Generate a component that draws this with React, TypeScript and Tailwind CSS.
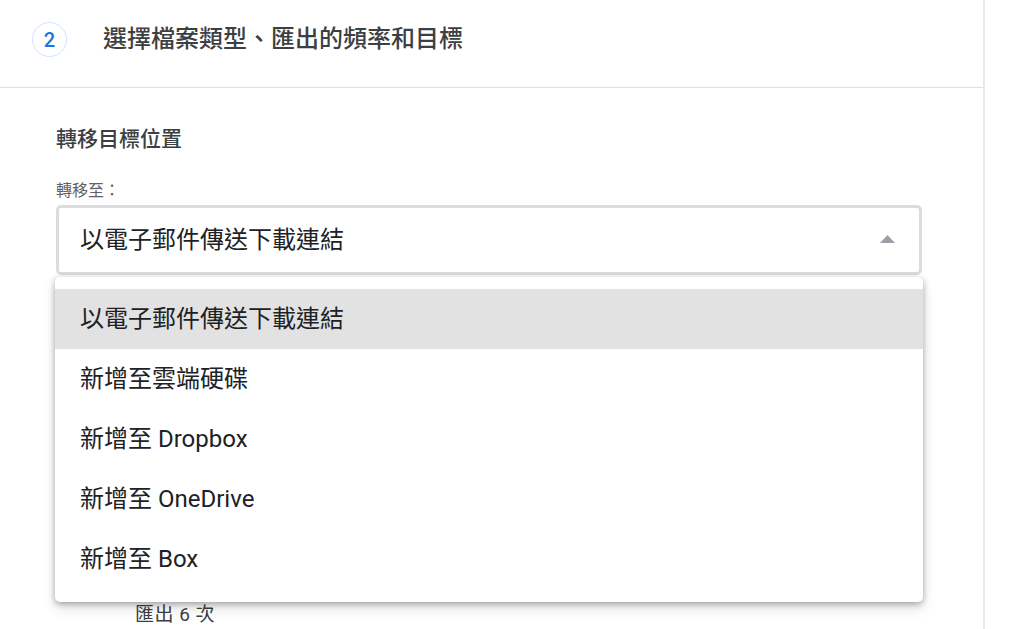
import { useState } from 'react';

const options = [
  '以電子郵件傳送下載連結',
  '新增至雲端硬碟',
  '新增至 Dropbox',
  '新增至 OneDrive',
  '新增至 Box',
];

export default function App() {
  const [selected] = useState(0);

  return (
    <div className="relative w-[1024px] h-[629px] overflow-hidden bg-white font-['Roboto','Noto_Sans_CJK_TC',sans-serif]">
      {/* Card */}
      <div className="w-[985px] h-full bg-white border-r-2 border-[#e8e8e8]">
        {/* Step header */}
        <div className="h-[88px] border-b border-[#e0e0e0] flex items-start pt-[22px] pl-[32px]">
          <div className="w-[35px] h-[35px] rounded-full border border-[#d2e3fc] flex items-center justify-center text-[#1a73e8] text-[20px] font-medium leading-none">
            2
          </div>
          <h2 className="ml-[36px] mt-[2px] text-[24px] leading-[30px] font-medium text-[#3c4043]">
            選擇檔案類型、匯出的頻率和目標
          </h2>
        </div>

        {/* Body */}
        <div className="pl-[56px] pr-[61px] pt-[37px]">
          <h3 className="text-[21px] leading-[28px] font-medium text-[#3c4043]">轉移目標位置</h3>
          <p className="mt-[28px] text-[16px] leading-[20px] text-[#5f6368]">轉移至：</p>

          <div className="mt-[4px] h-[70px] border-[3px] border-[#dadce0] rounded-[5px] flex items-center justify-between pl-[21px] pr-[24px]">
            <span className="text-[24px] text-[#202124]">{options[selected]}</span>
            <svg width="15" height="8" viewBox="0 0 15 8" className="mt-[-2px]">
              <path d="M0 8 L7.5 0 L15 8 Z" fill="#9aa0a6" />
            </svg>
          </div>

          <p className="mt-[328px] pl-[79px] text-[19px] leading-[24px] tracking-[0.5px] text-[#3c4043]">匯出 6 次</p>
        </div>
      </div>

      {/* Dropdown menu */}
      <div className="absolute left-[55px] top-[277px] w-[868px] bg-white rounded-[5px] pt-[12px] pb-[13px] shadow-[0_2px_6px_rgba(0,0,0,0.3),0_6px_14px_rgba(0,0,0,0.12)]">
        {options.map((o, i) => (
          <div
            key={o}
            className={`h-[60px] flex items-center pl-[25px] text-[24px] text-[#202124] ${i === selected ? 'bg-[#e2e2e2]' : ''}`}
          >
            {o}
          </div>
        ))}
      </div>
    </div>
  );
}
